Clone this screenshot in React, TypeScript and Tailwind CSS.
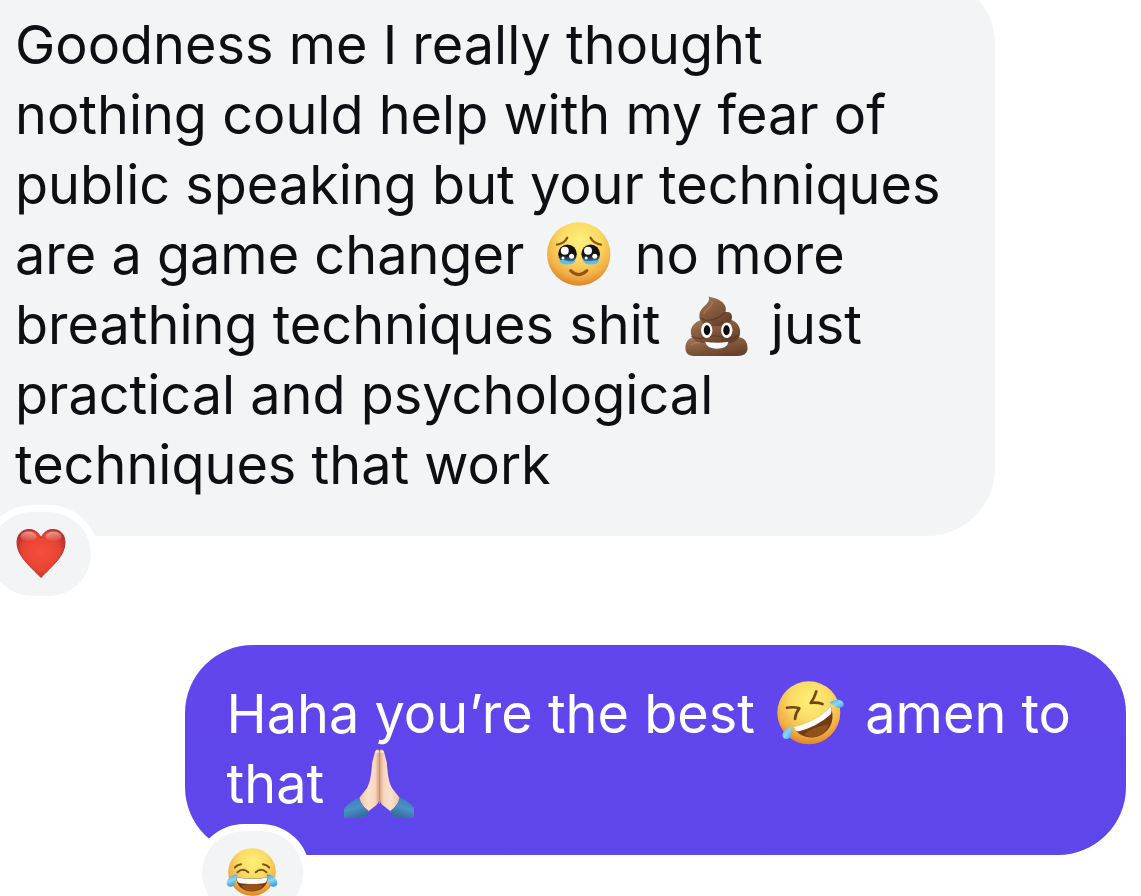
import type { ReactNode } from 'react';

const emojiClass = 'mx-[5px] inline-block size-[70px] align-[-16px]';

function FaceGradient({ id }: { id: string }) {
  return (
    <radialGradient id={id} cx="0.52" cy="0.3" r="0.7">
      <stop offset="0" stopColor="#fdf07a" />
      <stop offset="0.45" stopColor="#fadb63" />
      <stop offset="0.78" stopColor="#f2b146" />
      <stop offset="1" stopColor="#dd8429" />
    </radialGradient>
  );
}

function TearyFace() {
  return (
    <svg viewBox="0 0 70 70" className={emojiClass} role="img" aria-label="Face holding back tears">
      <defs>
        <FaceGradient id="tearyFace" />
        <linearGradient id="tearyEye" x1="0" y1="0" x2="0" y2="1">
          <stop offset="0.55" stopColor="#15100f" />
          <stop offset="0.8" stopColor="#31577a" />
          <stop offset="1" stopColor="#55bdf0" />
        </linearGradient>
      </defs>
      <circle cx="34.7" cy="34" r="31.7" fill="url(#tearyFace)" />
      <g fill="none" stroke="#8c5818" strokeWidth="2.4" strokeLinecap="round">
        <path d="M13 24.6C17.500 24 21.500 21.500 23.200 17.800" />
        <path d="M46.600 17.800C48.500 21.500 52.500 24 57 24.600" />
      </g>
      <ellipse cx="23.500" cy="34" rx="9.300" ry="9.500" fill="url(#tearyEye)" />
      <ellipse cx="46.700" cy="34" rx="9.300" ry="9.500" fill="url(#tearyEye)" />
      <path d="M15 40.500q4-1 8.500.5t8.500-1q-1.500 4.500-8.500 4.500t-8.500-4zM38.500 40q4 2 8.500 1t8.500-.5q-1.500 4-8.500 4t-8.500-4.500z" fill="#5dbdeb" />
      <g fill="#fff">
        <circle cx="20.800" cy="30.800" r="4" />
        <circle cx="27.600" cy="36.200" r="2.500" />
        <circle cx="19" cy="38" r="1.500" />
        <circle cx="44" cy="30.800" r="4" />
        <circle cx="50.800" cy="36.200" r="2.500" />
        <circle cx="42.200" cy="38" r="1.500" />
      </g>
      <path d="M26.600 50.600Q34.700 58.500 42.900 50.600" fill="none" stroke="#91541a" strokeWidth="3" strokeLinecap="round" />
    </svg>
  );
}

function Poo() {
  return (
    <svg viewBox="0 0 70 70" className={emojiClass} role="img" aria-label="Pile of poo">
      <defs>
        <linearGradient id="pooBody" x1="0" y1="0" x2="0.6" y2="1">
          <stop offset="0" stopColor="#a9815f" />
          <stop offset="0.45" stopColor="#8a5e41" />
          <stop offset="1" stopColor="#66422b" />
        </linearGradient>
      </defs>
      <path d="M16 47C7 46.500 4 53 4.500 59C5 65.500 10 66.300 17 66H56C64 66.300 67 62 66.500 57C66 50 61.500 46.500 55 47Z" fill="url(#pooBody)" />
      <path d="M21 30C12 31.500 7.500 40 11 46.500C14 53 21 53.500 27 52.500L45 53C53 54 58 50 59 44C60 37 56 31 48 29Z" fill="url(#pooBody)" />
      <path d="M27.500 6.500C30.500 13.500 20 16 18.500 24C17 33.500 26 37 34 36C42 37 51 34 51 27C51 23.500 49 21.500 44.500 22C47 13.500 38 8.500 27.500 6.500Z" fill="url(#pooBody)" />
      <path d="M20 28C26 33 38 29 44.500 22M10 46C20 52 28 45 35 46S51 51 58 45" fill="none" stroke="#57351f" strokeWidth="1.300" opacity="0.6" />
      <path d="M31 12C32 17 24 19 22.500 24M10 55Q13 51.500 19 53" fill="none" stroke="#bb9475" strokeWidth="1.500" opacity="0.45" />
      <ellipse cx="25.700" cy="40.200" rx="5.700" ry="7.700" fill="#fff" />
      <ellipse cx="45.800" cy="40.200" rx="5.700" ry="7.700" fill="#fff" />
      <ellipse cx="26" cy="40.200" rx="3.200" ry="5" fill="#080808" />
      <ellipse cx="45.500" cy="40.200" rx="3.200" ry="5" fill="#080808" />
      <path d="M24 51.800Q36 53.500 47.500 51.800Q46 58.800 36 58.800Q26 58.800 24 51.800Z" fill="#fff" />
    </svg>
  );
}

function RollingLaugh() {
  return (
    <svg viewBox="0 0 70 70" className={emojiClass} role="img" aria-label="Rolling on the floor laughing">
      <defs>
        <FaceGradient id="rollingFace" />
        <linearGradient id="rollingTear" x1="0" y1="0" x2="1" y2="1">
          <stop offset="0" stopColor="#4aa9e2" />
          <stop offset="0.5" stopColor="#8bd5f4" />
          <stop offset="1" stopColor="#3fa0df" />
        </linearGradient>
      </defs>
      <circle cx="33.800" cy="33.800" r="31.500" fill="url(#rollingFace)" />
      <g fill="none" stroke="#73450f" strokeWidth="2.700" strokeLinecap="round" strokeLinejoin="round">
        <path d="M12 28.800Q18 27.500 24.300 29.300Q20.500 34 20 39.800" />
        <path d="M41.300 12.500Q39.500 19 35.700 24Q42 23 47.500 25" />
      </g>
      <path d="M19 49C31 46 47 38 55.500 27C60 38 57 49 48 55C38 61 25 59 19 49Z" fill="#713b18" />
      <path d="M29 55Q41 47 54 45Q51 54 43 57.500Q35 60 29 55Z" fill="#925118" />
      <path d="M19 48C32 45 47 38 55.500 27Q57.500 31 56 35Q42 48 23 52.500Q19.500 52 19 48Z" fill="#fff" />
      <path d="M54.500 24C58 21 64 19.500 67.500 22.500C71 26 67 30 62.500 28.700C59.500 28 57.500 25 54.500 24Z" fill="url(#rollingTear)" />
      <path d="M17.500 46.500C12 49 7.200 52 7.500 56.500C8 61.500 14.500 61 16.500 56.500C17.800 53 16.200 50 17.500 46.500Z" fill="url(#rollingTear)" />
    </svg>
  );
}

function FoldedHands() {
  return (
    <svg viewBox="0 0 70 70" className={emojiClass} role="img" aria-label="Folded hands">
      <defs>
        <linearGradient id="handSkin" x1="0" y1="0" x2="1" y2="0">
          <stop offset="0" stopColor="#e9bfa4" />
          <stop offset="0.45" stopColor="#fbe0cc" />
          <stop offset="0.8" stopColor="#f7d7bd" />
          <stop offset="1" stopColor="#d79e80" />
        </linearGradient>
        <linearGradient id="handSleeve" x1="0" y1="0" x2="0.4" y2="1">
          <stop offset="0" stopColor="#3a78b4" />
          <stop offset="0.6" stopColor="#4c90c6" />
          <stop offset="1" stopColor="#35709f" />
        </linearGradient>
        <g id="prayingHand">
          <path d="M35.500 1.500C34.500 -.2 31.700 0 31 3L28.300 13C27.300 24 26.500 33 23 39L14.500 50L23.500 63L32.500 56Q35.500 53.500 35.500 48Z" fill="url(#handSkin)" />
          <path d="M31.800 3.500Q33 1 34.500 3.500" fill="none" stroke="#fff3e8" strokeWidth="1.500" />
          <path d="M0 60Q6 52 15.500 48.500Q17 57 24.500 61.500L21.500 69H0Z" fill="url(#handSleeve)" />
        </g>
      </defs>
      <use href="#prayingHand" />
      <use href="#prayingHand" transform="matrix(-1 0 0 1 71 0)" />
      <path d="M35.500 2V55" stroke="#c88d70" strokeWidth="1" />
    </svg>
  );
}

function Heart() {
  return (
    <svg viewBox="0 0 50 50" className="size-[50px]" role="img" aria-label="Red heart">
      <defs>
        <radialGradient id="heartFill" cx="0.5" cy="0.48" r="0.6">
          <stop offset="0" stopColor="#f84e3e" />
          <stop offset="0.65" stopColor="#e54333" />
          <stop offset="1" stopColor="#b32a28" />
        </radialGradient>
        <linearGradient id="heartShine" x1="0" y1="0" x2="0" y2="1">
          <stop offset="0" stopColor="#fff" stopOpacity="0.5" />
          <stop offset="1" stopColor="#fff" stopOpacity="0" />
        </linearGradient>
      </defs>
      <path d="M25 9C22 2 17 .5 13 .5C5.500 .5 1 6 1 13.500C1 27 14 37 25 48.500C36 37 49 27 49 13.500C49 6 44.500 .5 37 .5C33 .5 28 2 25 9Z" fill="url(#heartFill)" stroke="#b5312e" strokeWidth="1" />
      <ellipse cx="12.500" cy="7.500" rx="8" ry="5" fill="url(#heartShine)" />
      <ellipse cx="37.500" cy="7.500" rx="8" ry="5" fill="url(#heartShine)" />
    </svg>
  );
}

function TearsOfJoy() {
  return (
    <svg viewBox="0 0 52 50" className="h-[50px] w-[52px]" role="img" aria-label="Face with tears of joy">
      <defs>
        <FaceGradient id="joyFace" />
        <linearGradient id="joyTear" x1="0" y1="0" x2="0.3" y2="1">
          <stop offset="0" stopColor="#3b9ed8" />
          <stop offset="0.55" stopColor="#8cd7f5" />
          <stop offset="1" stopColor="#3fa1df" />
        </linearGradient>
      </defs>
      <circle cx="26" cy="24" r="23.800" fill="url(#joyFace)" />
      <g fill="none" stroke="#80500f" strokeWidth="2" strokeLinecap="round">
        <path d="M8.800 19.500Q11 16.800 15 16.200" />
        <path d="M37 16.200Q41 16.800 43.200 19.500" />
        <path d="M11.500 24.300Q17 19.200 22.300 24.300" />
        <path d="M29.700 24.300Q35 19.200 40.500 24.300" />
      </g>
      <path d="M10.500 29.500Q26 31.500 41.500 29.500C42 38 35 43.500 26 43.500S10 38 10.500 29.500Z" fill="#703815" />
      <path d="M15 38Q26 33 37 38Q33 43 26 43T15 38Z" fill="#985318" />
      <path d="M11 29.700Q26 31.700 41 29.700Q41.500 35 37.500 35.300Q26 36.500 14.500 35.300Q10.500 35 11 29.700Z" fill="#fff" />
      <path d="M11.500 26.500C8.500 25.500 3 29 1.300 32.500C-1 37 3 40.500 7 38C10.500 36 9.500 30 11.500 26.500Z" fill="url(#joyTear)" />
      <path d="M40.500 26.500C43.500 25.500 49 29 50.700 32.500C53 37 49 40.500 45 38C41.500 36 42.500 30 40.500 26.500Z" fill="url(#joyTear)" />
    </svg>
  );
}

function Line({ children }: { children: ReactNode }) {
  return <span className="block h-[70px] whitespace-nowrap">{children}</span>;
}

function Bubble({ tone, reaction, children }: { tone: string; reaction: ReactNode; children: ReactNode }) {
  return (
    <div className={`relative w-fit rounded-[68px] pt-[34px] pr-[55px] pb-[36px] pl-[42px] ${tone}`}>
      <p>{children}</p>
      <button
        type="button"
        className="absolute top-full left-[17px] -mt-6 flex h-[84px] w-[101px] items-center justify-center rounded-full bg-[#f3f4f6] ring-[7px] ring-white"
      >
        {reaction}
      </button>
    </div>
  );
}

export default function App() {
  return (
    <main className="flex h-screen flex-col gap-[109px] overflow-hidden bg-white font-['Inter','Liberation_Sans',sans-serif] text-[54px] leading-[70px]">
      <div className="-mt-6 -ml-[27px] self-start">
        <Bubble tone="bg-[#f3f4f6] text-[#0c1014]" reaction={<Heart />}>
          <Line>Goodness me I really thought</Line>
          <Line>nothing could help with my fear of</Line>
          <Line>public speaking but your techniques</Line>
          <Line>
            are a game changer <TearyFace /> no more
          </Line>
          <Line>
            breathing techniques shit <Poo /> just
          </Line>
          <Line>practical and psychological</Line>
          <Line>techniques that work</Line>
        </Bubble>
      </div>
      <div className="mr-[15px] self-end">
        <Bubble tone="bg-linear-to-b from-[#6245ee] to-[#5d47ea] text-white" reaction={<TearsOfJoy />}>
          <Line>
            Haha you’re the best <RollingLaugh /> amen to
          </Line>
          <Line>
            that <FoldedHands />
          </Line>
        </Bubble>
      </div>
    </main>
  );
}
